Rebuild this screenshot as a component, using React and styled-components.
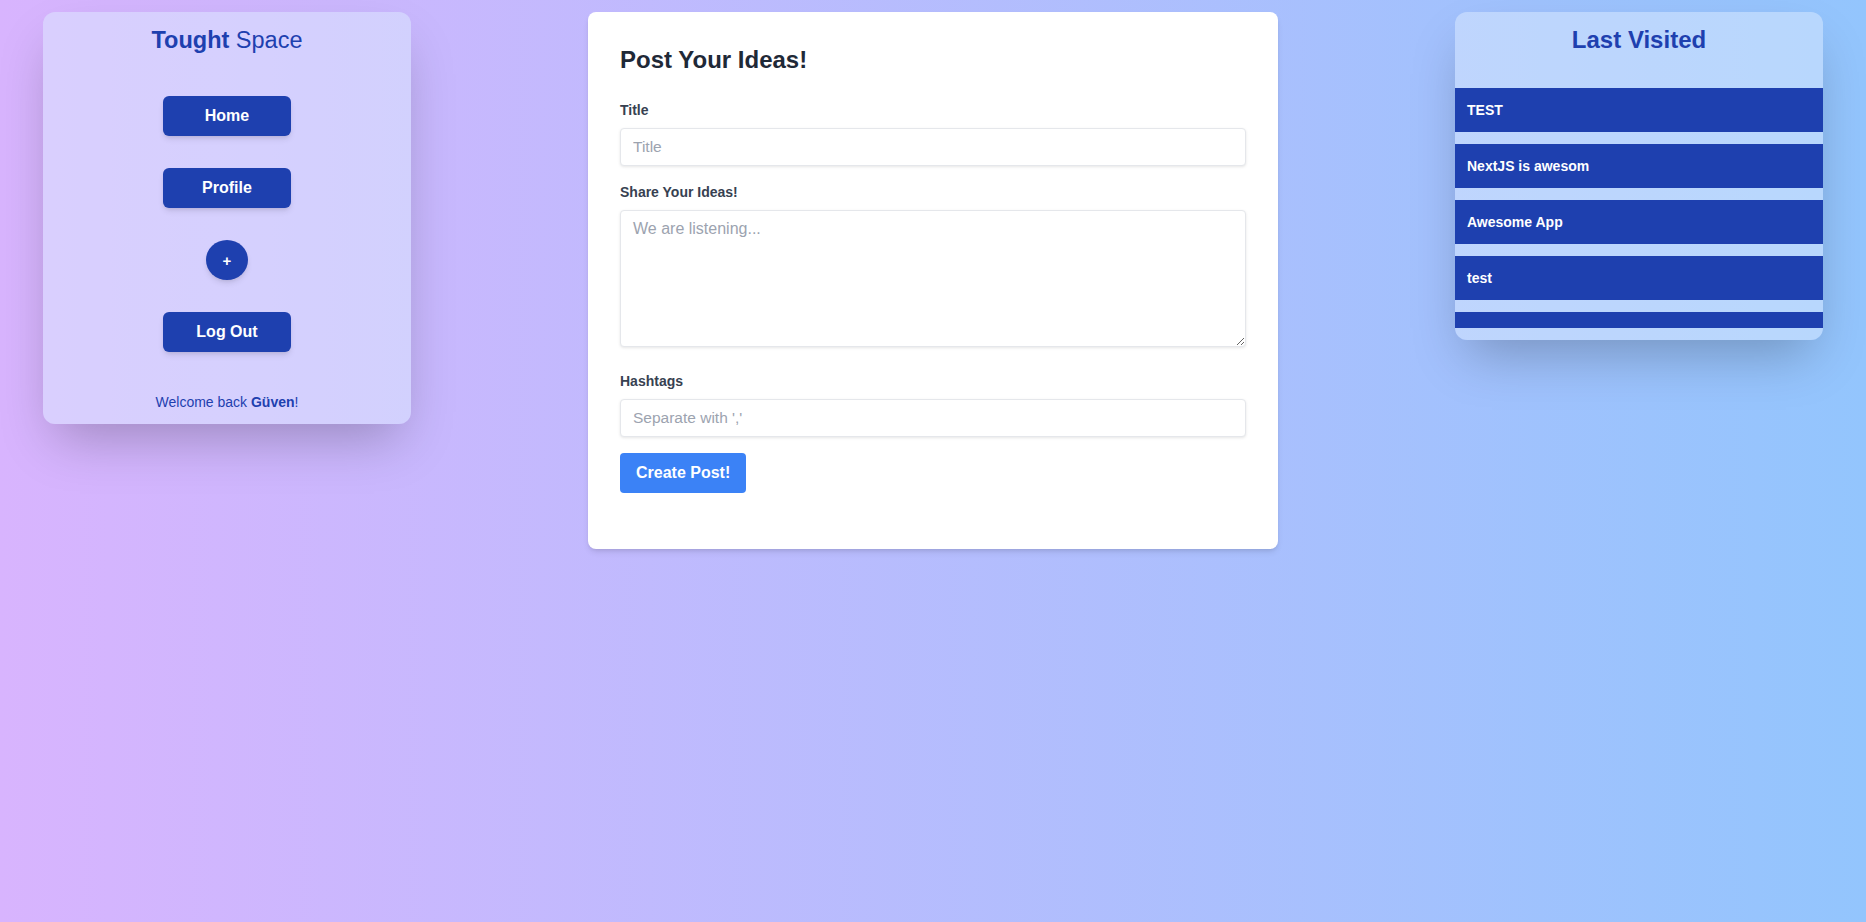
import React from "react";
import styled, { createGlobalStyle } from "styled-components";

const GlobalStyle = createGlobalStyle`
  html, body { margin: 0; padding: 0; }
  body {
    font-family: "Liberation Sans", Arial, sans-serif;
  }
  * { box-sizing: border-box; }
`;

const Page = styled.div`
  min-height: 100vh;
  background: linear-gradient(to right, #d8b4fe, #93c5fd);
  display: flex;
  justify-content: space-between;
  align-items: flex-start;
  padding: 12px 43px;
`;

const SideCard = styled.aside`
  width: 368px;
  background: rgba(219, 234, 254, 0.5);
  border-radius: 12px;
  box-shadow: 0 25px 50px -12px rgba(0, 0, 0, 0.25);
  padding: 12px 0;
  display: flex;
  flex-direction: column;
  align-items: ${(p) => (p.$stretch ? "stretch" : "center")};
`;

const Brand = styled.h1`
  margin: 0 0 40px;
  font-size: 23.5px;
  line-height: 32px;
  font-weight: 400;
  color: #1e40af;
  text-align: center;
  strong { font-weight: 700; }
`;

const Nav = styled.nav`
  display: flex;
  flex-direction: column;
  align-items: center;
  gap: 32px;
`;

const NavButton = styled.button`
  width: ${(p) => (p.$round ? "42px" : "128px")};
  height: 40px;
  border: none;
  border-radius: ${(p) => (p.$round ? "50%" : "6px")};
  background: #1e40af;
  color: #ffffff;
  font-family: inherit;
  font-weight: 700;
  font-size: ${(p) => (p.$round ? "15px" : "16px")};
  box-shadow: 0 4px 6px -1px rgba(0, 0, 0, 0.1), 0 2px 4px -2px rgba(0, 0, 0, 0.1);
  cursor: pointer;
  padding: 0;
`;

const Welcome = styled.p`
  margin: 40px 0 0;
  font-size: 14px;
  line-height: 20px;
  color: #1e40af;
  strong { font-weight: 700; }
`;

const FormCard = styled.main`
  width: 690px;
  background: #ffffff;
  border-radius: 8px;
  box-shadow: 0 4px 6px -1px rgba(0, 0, 0, 0.1), 0 2px 4px -2px rgba(0, 0, 0, 0.1);
  padding: 32px 32px 56px;
`;

const Heading = styled.h2`
  margin: 0 0 24px;
  font-size: 24px;
  line-height: 32px;
  font-weight: 700;
  color: #1f2937;
`;

const Field = styled.div`
  margin-bottom: ${(p) => p.$mb || "16px"};
`;

const Label = styled.label`
  display: block;
  margin-bottom: 8px;
  font-size: 14px;
  line-height: 20px;
  font-weight: 700;
  color: #374151;
`;

const fieldBase = `
  display: block;
  width: 100%;
  border: 1px solid #e5e7eb;
  border-radius: 4px;
  box-shadow: 0 1px 3px 0 rgba(0, 0, 0, 0.1);
  padding: 8px 12px;
  font-family: "Liberation Sans", Arial, sans-serif;
  color: #374151;
  background: #fff;
  outline: none;
  &::placeholder { color: #9ca3af; }
`;

const Input = styled.input`
  ${fieldBase}
  height: 38px;
  font-size: 15.5px;
`;

const TextArea = styled.textarea`
  ${fieldBase}
  height: 137px;
  font-size: 16px;
  line-height: 19px;
  resize: both;
`;

const SubmitButton = styled.button`
  height: 40px;
  padding: 0 16px;
  border: none;
  border-radius: 4px;
  background: #3b82f6;
  color: #fff;
  font-family: inherit;
  font-size: 16px;
  font-weight: 700;
  cursor: pointer;
`;

const PanelTitle = styled.h2`
  margin: 0 0 32px;
  font-size: 24px;
  line-height: 32px;
  font-weight: 700;
  color: #1e40af;
  text-align: center;
`;

const VisitList = styled.ul`
  list-style: none;
  margin: 0;
  padding: 0;
  display: flex;
  flex-direction: column;
  gap: 12px;
`;

const VisitItem = styled.li`
  background: #1e40af;
  color: #fff;
  font-size: 14px;
  font-weight: 700;
  line-height: 28px;
  padding: 8px 12px;
  min-height: 16px;
`;

const visited = ["TEST", "NextJS is awesom", "Awesome App", "test", ""];

export default function App() {
  return (
    <>
      <GlobalStyle />
      <Page>
        <SideCard>
          <Brand>
            <strong>Tought</strong> Space
          </Brand>
          <Nav>
            <NavButton>Home</NavButton>
            <NavButton>Profile</NavButton>
            <NavButton $round>+</NavButton>
            <NavButton>Log Out</NavButton>
          </Nav>
          <Welcome>
            Welcome back <strong>Güven</strong>!
          </Welcome>
        </SideCard>

        <FormCard>
          <Heading>Post Your Ideas!</Heading>
          <Field>
            <Label htmlFor="title">Title</Label>
            <Input id="title" placeholder="Title" />
          </Field>
          <Field $mb="24px">
            <Label htmlFor="content">Share Your Ideas!</Label>
            <TextArea id="content" placeholder="We are listening..." />
          </Field>
          <Field>
            <Label htmlFor="tags">Hashtags</Label>
            <Input id="tags" placeholder="Separate with ','" />
          </Field>
          <SubmitButton>Create Post!</SubmitButton>
        </FormCard>

        <SideCard $stretch>
          <PanelTitle>Last Visited</PanelTitle>
          <VisitList>
            {visited.map((v, i) => (
              <VisitItem key={i}>{v}</VisitItem>
            ))}
          </VisitList>
        </SideCard>
      </Page>
    </>
  );
}
